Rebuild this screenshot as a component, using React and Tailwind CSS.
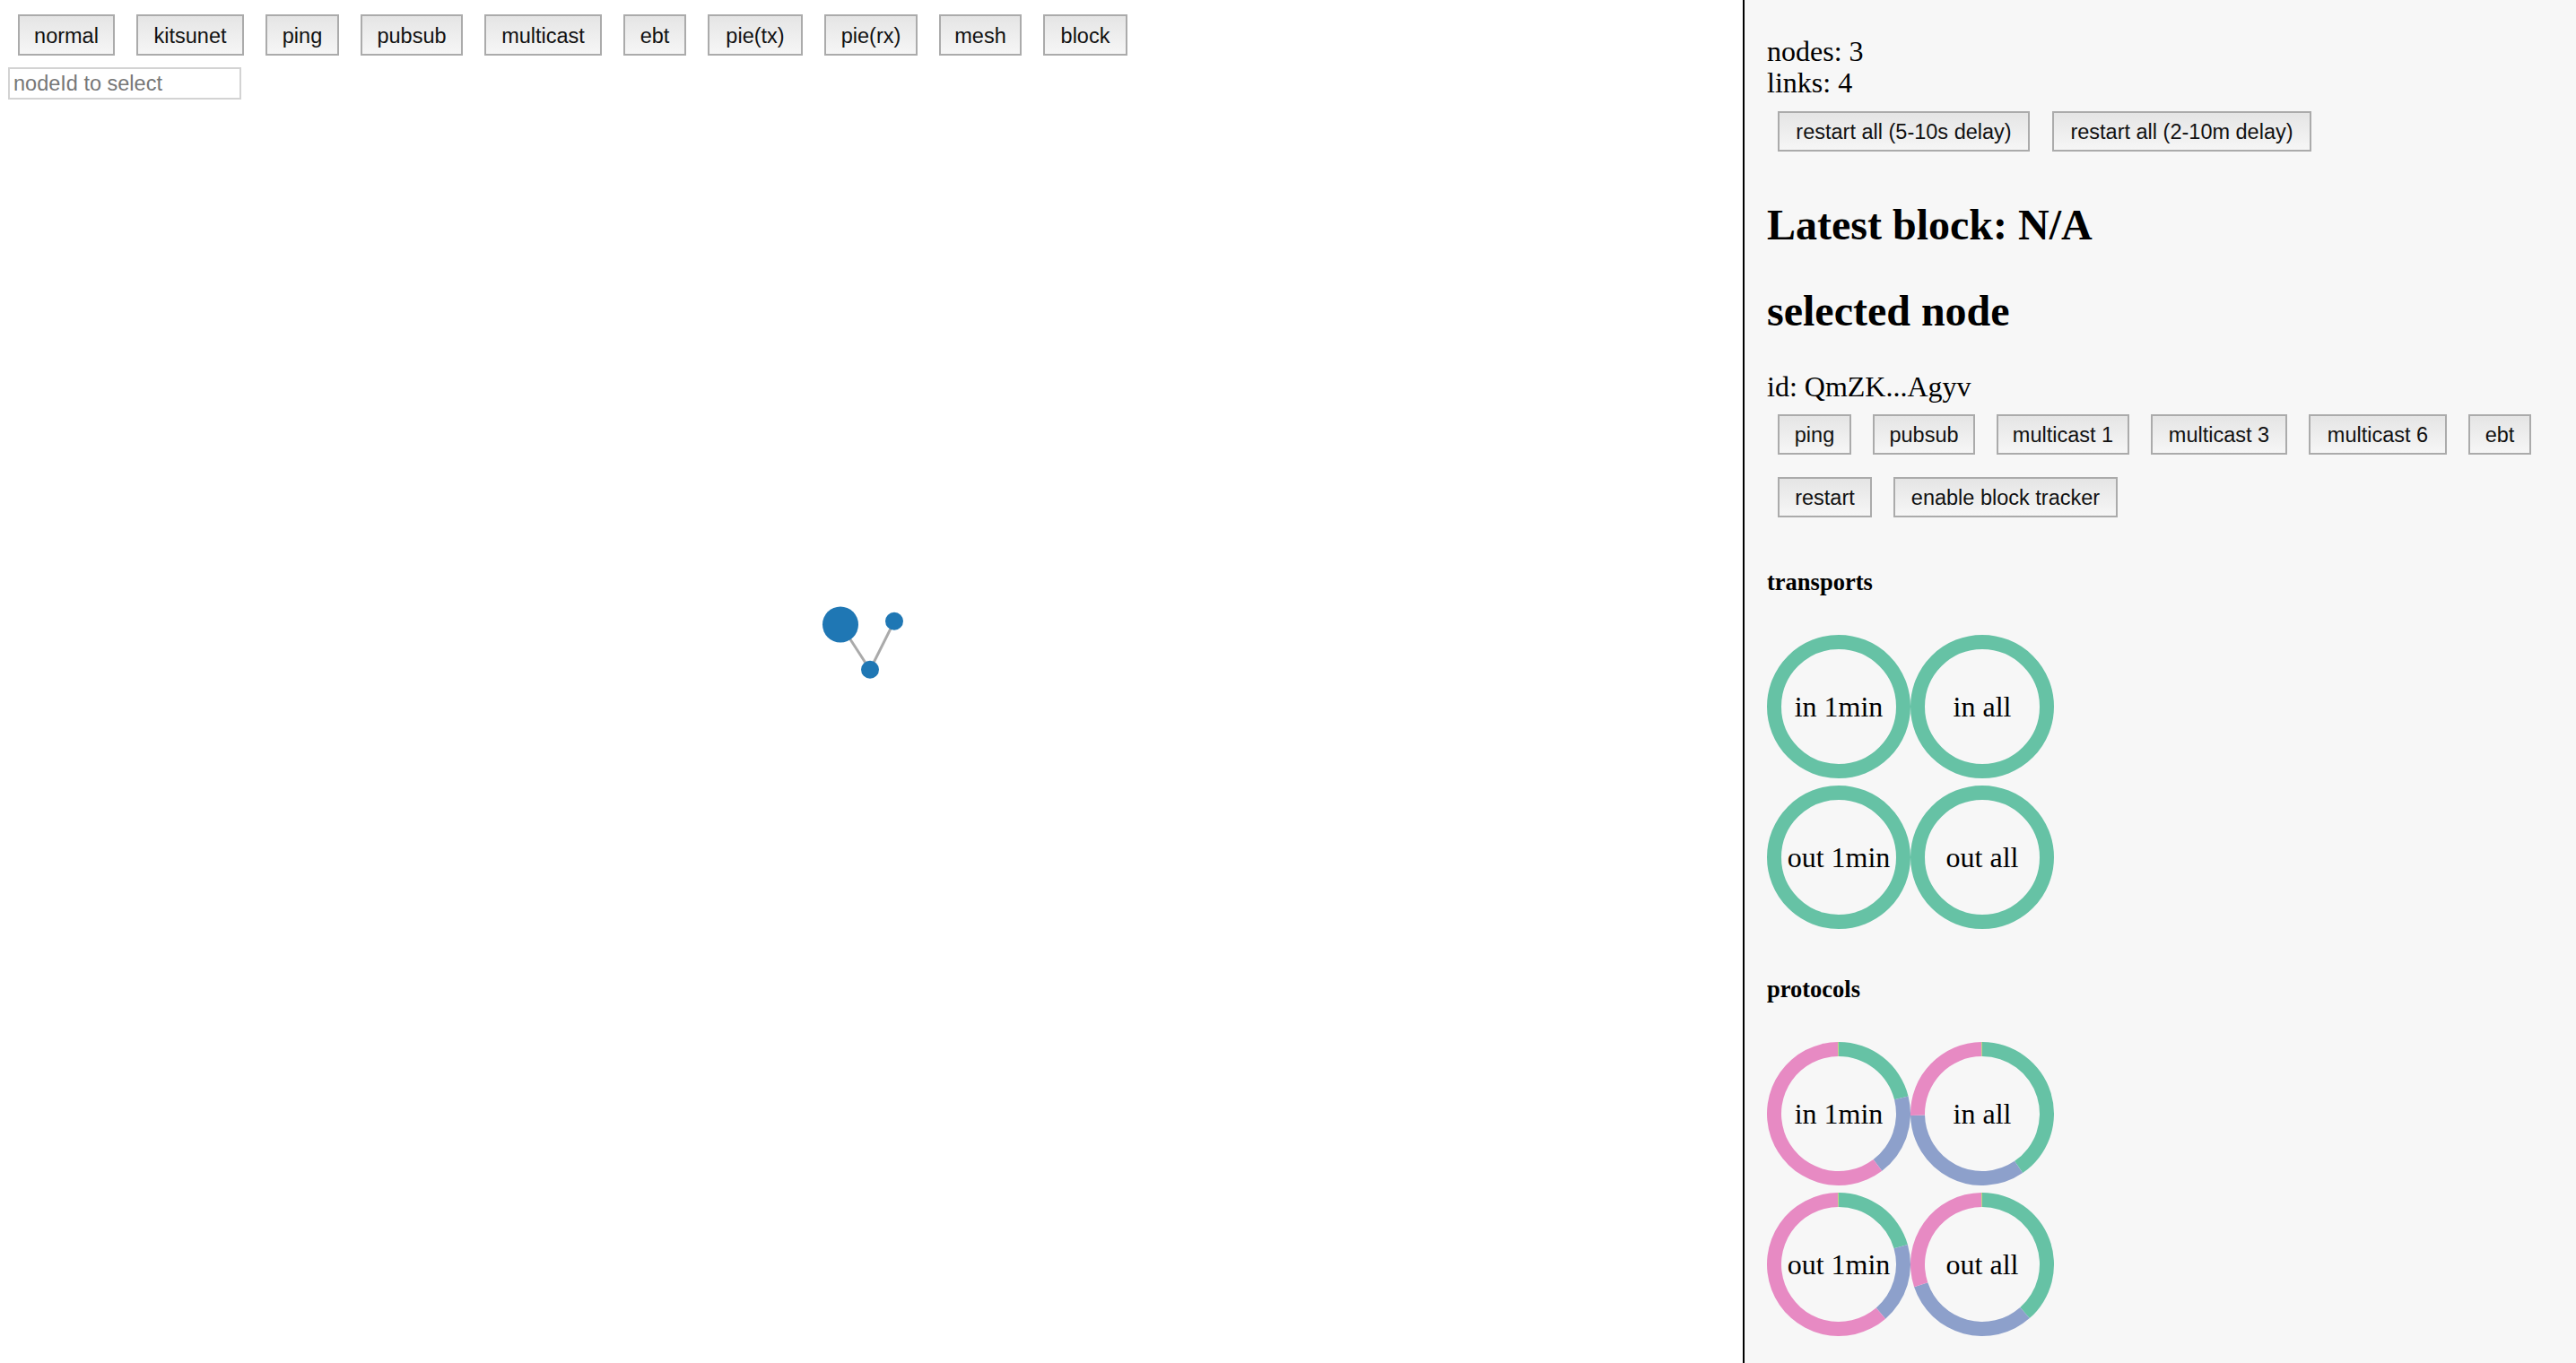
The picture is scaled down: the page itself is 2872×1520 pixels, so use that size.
import React from "react";

const GREEN = "#66c2a5";
const BLUE = "#8da0cb";
const PINK = "#e78ac3";
const LIME = "#a6d854";

function arcPath(cx, cy, r0, r1, a0, a1) {
  const rad = (d) => ((d - 90) * Math.PI) / 180;
  const p = (r, d) => [cx + r * Math.cos(rad(d)), cy + r * Math.sin(rad(d))];
  const large = a1 - a0 > 180 ? 1 : 0;
  const [x0, y0] = p(r1, a0);
  const [x1, y1] = p(r1, a1);
  const [x2, y2] = p(r0, a1);
  const [x3, y3] = p(r0, a0);
  return `M${x0},${y0}A${r1},${r1} 0 ${large} 1 ${x1},${y1}L${x2},${y2}A${r0},${r0} 0 ${large} 0 ${x3},${y3}Z`;
}

function Pie({ label, slices }) {
  return (
    <svg width="160" height="160" viewBox="0 0 160 160" className="block shrink-0">
      {slices ? (
        slices.map(([a0, a1, c], i) => (
          <path key={i} d={arcPath(80, 80, 64, 80, a0, a1)} fill={c} />
        ))
      ) : (
        <circle cx="80" cy="80" r="72" fill="none" stroke={GREEN} strokeWidth="16" />
      )}
      <text
        x="80"
        y="80"
        dy="0.35em"
        textAnchor="middle"
        fontFamily="'Liberation Serif', 'Times New Roman', serif"
        fontSize="32"
        fill="#000"
      >
        {label}
      </text>
    </svg>
  );
}

function Btn({ cls, children }) {
  return (
    <button
      className={
        "flex shrink-0 items-center justify-center pt-[3px] border-2 border-[#ababab] bg-linear-to-b from-[#e5e5e5] to-[#f6f6f6] text-[23.5px] text-[#111] font-['Liberation_Sans',Arial,sans-serif] whitespace-nowrap " +
        cls
      }
    >
      {children}
    </button>
  );
}

export default function App() {
  return (
    <div className="flex h-screen w-full overflow-hidden bg-white">
      {/* left: graph area */}
      <div className="flex h-full w-[1943px] shrink-0 flex-col">
        <div className="flex gap-[24px] pl-[20px] pt-[16px]">
          <Btn cls="w-[108px] h-[46px]">normal</Btn>
          <Btn cls="w-[120px] h-[46px]">kitsunet</Btn>
          <Btn cls="w-[82px] h-[46px]">ping</Btn>
          <Btn cls="w-[114px] h-[46px]">pubsub</Btn>
          <Btn cls="w-[131px] h-[46px]">multicast</Btn>
          <Btn cls="w-[70px] h-[46px]">ebt</Btn>
          <Btn cls="w-[106px] h-[46px]">pie(tx)</Btn>
          <Btn cls="w-[104px] h-[46px]">pie(rx)</Btn>
          <Btn cls="w-[92px] h-[46px]">mesh</Btn>
          <Btn cls="w-[94px] h-[46px]">block</Btn>
        </div>
        <input
          placeholder="nodeId to select"
          className="ml-[9px] mt-[13px] block h-[36px] w-[260px] border-2 border-[#d3d3d3] bg-white pl-[4px] text-[23.5px] font-['Liberation_Sans',Arial,sans-serif] placeholder:text-[#777] outline-none"
        />
        <svg className="block w-full flex-1" width="1943" height="1409">
          <line x1="937" y1="585" x2="970" y2="636" stroke="#aaaaaa" strokeWidth="3" />
          <line x1="997" y1="582" x2="970" y2="636" stroke="#aaaaaa" strokeWidth="3" />
          <circle cx="937" cy="585.5" r="20" fill="#1f77b4" />
          <circle cx="997" cy="581.7" r="10" fill="#1f77b4" />
          <circle cx="970" cy="635.7" r="10" fill="#1f77b4" />
        </svg>
      </div>

      {/* right: info panel */}
      <div className="flex h-full w-[929px] shrink-0 flex-col border-l-2 border-black bg-[#f7f7f7] pl-[25px] pt-[40px] font-['Liberation_Serif','Times_New_Roman',serif] text-black">
        <div className="text-[32px] leading-[35px]">nodes: 3</div>
        <div className="text-[32px] leading-[35px]">links: 4</div>
        <div className="ml-[12px] mt-[14px] flex gap-[25px]">
          <Btn cls="w-[281px] h-[45px]">restart all (5-10s delay)</Btn>
          <Btn cls="w-[289px] h-[45px]">restart all (2-10m delay)</Btn>
        </div>
        <h2 className="mt-[54px] text-[48px] font-bold leading-[55px]">Latest block: N/A</h2>
        <h2 className="mt-[41px] text-[48px] font-bold leading-[55px]">selected node</h2>
        <div className="mt-[40px] text-[32px] leading-[35px]">id: QmZK...Agyv</div>
        <div className="ml-[12px] mt-[13px] flex flex-wrap gap-x-[24px] gap-y-[25px]">
          <Btn cls="w-[82px] h-[45px]">ping</Btn>
          <Btn cls="w-[114px] h-[45px]">pubsub</Btn>
          <Btn cls="w-[148px] h-[45px]">multicast 1</Btn>
          <Btn cls="w-[152px] h-[45px]">multicast 3</Btn>
          <Btn cls="w-[154px] h-[45px]">multicast 6</Btn>
          <Btn cls="w-[70px] h-[45px]">ebt</Btn>
          <Btn cls="w-[105px] h-[45px]">restart</Btn>
          <Btn cls="w-[250px] h-[45px]">enable block tracker</Btn>
        </div>

        <h5 className="mt-[57px] text-[26.5px] font-bold leading-[30px]">transports</h5>
        <div className="mt-[44px] flex flex-col gap-[8px]">
          <div className="flex">
            <Pie label="in 1min" />
            <Pie label="in all" />
          </div>
          <div className="flex">
            <Pie label="out 1min" />
            <Pie label="out all" />
          </div>
        </div>

        <h5 className="mt-[52px] text-[26.5px] font-bold leading-[30px]">protocols</h5>
        <div className="mt-[44px] flex flex-col gap-[8px]">
          <div className="flex">
            <Pie
              label="in 1min"
              slices={[
                [0, 75.8, GREEN],
                [75.8, 142.9, BLUE],
                [142.9, 359.5, PINK],
                [359.5, 360, LIME],
              ]}
            />
            <Pie
              label="in all"
              slices={[
                [0, 145.7, GREEN],
                [145.7, 268.6, BLUE],
                [268.6, 359.5, PINK],
                [359.5, 360, LIME],
              ]}
            />
          </div>
          <div className="flex">
            <Pie
              label="out 1min"
              slices={[
                [0, 74, GREEN],
                [74, 139.3, BLUE],
                [139.3, 359.5, PINK],
                [359.5, 360, LIME],
              ]}
            />
            <Pie
              label="out all"
              slices={[
                [0, 138.7, GREEN],
                [138.7, 251.6, BLUE],
                [251.6, 359.5, PINK],
                [359.5, 360, LIME],
              ]}
            />
          </div>
        </div>
      </div>
    </div>
  );
}
